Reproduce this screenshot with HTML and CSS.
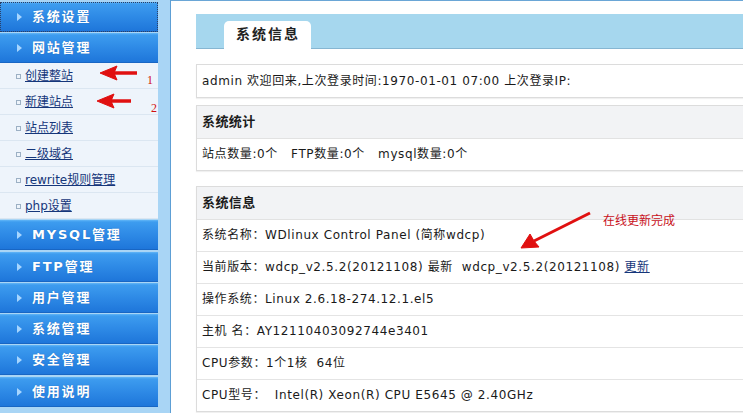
FILE: index.html
```html
<!DOCTYPE html>
<html lang="zh-CN">
<head>
    <meta charset="UTF-8">
    <title>wdcp 系统信息</title>
    <link rel="stylesheet" href="styles.css">
</head>
<body>
    <div class="page">
        <div class="sidebar">
            <a class="menu-title focused" href="#">系统设置</a>
            <a class="menu-title" href="#">网站管理</a>
            <ul class="submenu">
                <li><a href="#">创建整站</a></li>
                <li><a href="#">新建站点</a></li>
                <li><a href="#">站点列表</a></li>
                <li><a href="#">二级域名</a></li>
                <li><a href="#">rewrite规则管理</a></li>
                <li><a href="#">php设置</a></li>
            </ul>
            <a class="menu-title" href="#">MYSQL管理</a>
            <a class="menu-title" href="#">FTP管理</a>
            <a class="menu-title" href="#">用户管理</a>
            <a class="menu-title" href="#">系统管理</a>
            <a class="menu-title" href="#">安全管理</a>
            <a class="menu-title" href="#">使用说明</a>
        </div>

        <div class="content">
            <div class="tabbar">
                <span class="tab">系统信息</span>
            </div>

            <div class="box welcome">
                <div class="row">admin 欢迎回来,上次登录时间:1970-01-01 07:00 上次登录IP:</div>
            </div>

            <div class="box stats">
                <div class="box-head">系统统计</div>
                <div class="row">站点数量:0个&nbsp;&nbsp; FTP数量:0个&nbsp;&nbsp; mysql数量:0个</div>
            </div>

            <div class="box info">
                <div class="box-head">系统信息</div>
                <div class="row">系统名称：WDlinux Control Panel (简称wdcp)</div>
                <div class="row">当前版本：wdcp_v2.5.2(20121108) 最新&nbsp; wdcp_v2.5.2(20121108) <a href="#">更新</a></div>
                <div class="row">操作系统：Linux 2.6.18-274.12.1.el5</div>
                <div class="row">主机&nbsp;名：AY12110403092744e3401</div>
                <div class="row">CPU参数：1个1核&nbsp; 64位</div>
                <div class="row">CPU型号：&nbsp; Intel(R) Xeon(R) CPU E5645 @ 2.40GHz</div>
            </div>
        </div>

        <!-- hand-drawn annotations over the screenshot -->
        <svg class="marks" width="743" height="413" viewBox="0 0 743 413">
            <g fill="#e01010" stroke="#e01010">
                <line x1="137" y1="73" x2="112" y2="73" stroke-width="3.5"/>
                <polygon points="100,73 117,66 114,73 117,80" stroke-width="1"/>
                <line x1="131" y1="101" x2="109" y2="101" stroke-width="3.5"/>
                <polygon points="97,101 114,94 111,101 114,108" stroke-width="1"/>
                <line x1="590" y1="213" x2="534" y2="241" stroke-width="3"/>
                <polygon points="521,248 530,234 534,241 539,247" stroke-width="1"/>
            </g>
        </svg>
        <span class="note note-1">1</span>
        <span class="note note-2">2</span>
        <span class="note note-done">在线更新完成</span>
    </div>
</body>
</html>
```

FILE: styles.css
```css
html, body {
    margin: 0;
    padding: 0;
    overflow: hidden;
}
body {
    font-family: 'DejaVu Sans', 'Noto Sans CJK SC', sans-serif;
    font-size: 12px;
    color: #222;
    background-color: #fff;
}
.page {
    position: relative;
    display: flex;
    width: 743px;
    height: 413px;
    overflow: hidden;
}

/* left menu */
.sidebar {
    flex: 0 0 171px;
    background-color: #a9d5f5;
    border-right: 1px solid #5d9fd5;
    padding-top: 2px;
    box-sizing: border-box;
}
.menu-title {
    position: relative;
    display: block;
    width: 158px;
    height: 30px;
    margin-bottom: 1.3px;
    box-sizing: border-box;
    padding-left: 32px;
    line-height: 30px;
    font-size: 13px;
    font-weight: bold;
    letter-spacing: 1.8px;
    color: #fff;
    text-decoration: none;
    text-shadow: 0 0 1px #1b5fae;
    background: linear-gradient(#62b6f7 0, #3d9cef 2px, #2e8ae6 50%, #1e76da 100%);
    border-bottom: 1px solid #1866c4;
}
.menu-title::before {
    content: "";
    position: absolute;
    left: 17px;
    top: 11px;
    border-style: solid;
    border-width: 4px 0 4px 5px;
    border-color: transparent transparent transparent #a7d6ff;
}
.menu-title.focused {
    outline: 1px dotted #2a3f66;
    outline-offset: -1px;
}
.submenu {
    list-style: none;
    margin: -1.3px 0 1px;
    padding: 0;
    width: 158px;
}
.submenu li {
    position: relative;
    height: 26px;
    line-height: 26px;
    padding-left: 25px;
    background-color: #eef4fb;
    border-bottom: 1px solid #dbe6f1;
    box-sizing: border-box;
}
.submenu li::before {
    content: "";
    position: absolute;
    left: 16px;
    top: 11px;
    width: 3px;
    height: 3px;
    border: 1px solid #9cb0c4;
}
.submenu a {
    color: #15367a;
}

/* right side */
.content {
    flex: 1;
    border-top: 1px solid #6aa6d6;
    padding: 13px 0 0 25px;
    overflow: hidden;
}
.tabbar {
    width: 600px;
    height: 35px;
    box-sizing: border-box;
    padding: 7px 0 0 28px;
    background-color: #a6d7ee;
    border-bottom: 1px solid #86b6d2;
}
.tab {
    display: inline-block;
    width: 87px;
    height: 28px;
    box-sizing: border-box;
    padding-left: 12px;
    line-height: 27px;
    background-color: #fff;
    border-radius: 5px 5px 0 0;
    font-size: 14px;
    font-weight: bold;
    letter-spacing: 2px;
    color: #222;
}
.box {
    width: 600px;
    border: 1px solid #dcdcdc;
    box-shadow: 0 1px 1px rgba(0, 0, 0, 0.06);
    letter-spacing: 0.6px;
}
.welcome {
    margin-top: 15px;
}
.welcome .row {
    height: 32px;
    line-height: 32px;
}
.stats {
    margin-top: 7px;
}
.info {
    margin-top: 15px;
}
.box-head {
    height: 32px;
    line-height: 32px;
    padding-left: 5px;
    background-color: #f2f3f5;
    border-bottom: 1px solid #e2e2e2;
    font-size: 13px;
    font-weight: bold;
    letter-spacing: 0.4px;
    color: #1d1d1d;
}
.row {
    height: 31px;
    line-height: 31px;
    padding-left: 5px;
    border-bottom: 1px solid #e4e4e4;
    white-space: nowrap;
    color: #1a1a1a;
}
.row:last-child {
    border-bottom: none;
}
.row a {
    color: #15367a;
}

/* annotations */
.marks {
    position: absolute;
    left: 0;
    top: 0;
    pointer-events: none;
}
.note {
    position: absolute;
    color: #d01010;
    font-family: 'Liberation Serif', serif;
    font-size: 12px;
}
.note-1 {
    left: 147px;
    top: 73px;
}
.note-2 {
    left: 151px;
    top: 101px;
}
.note-done {
    left: 603px;
    top: 211px;
    font-family: 'Noto Sans CJK SC', sans-serif;
    font-size: 12px;
    color: #c8101a;
}
```
